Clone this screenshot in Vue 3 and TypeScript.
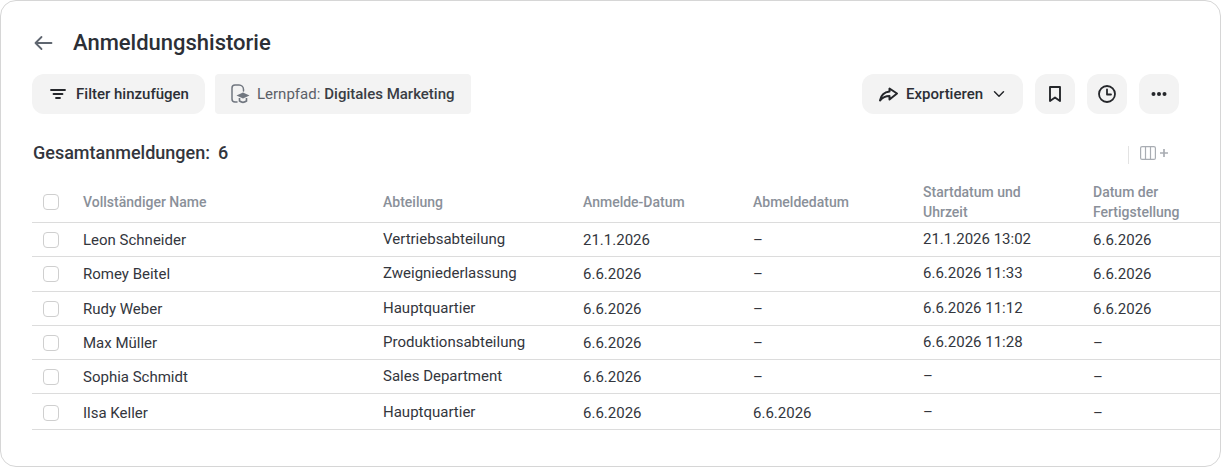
<script setup lang="ts">
interface Row {
  name: string
  department: string
  enrolled: string
  unenrolled: string
  started: string
  finished: string
}

const rows: Row[] = [
  { name: 'Leon Schneider', department: 'Vertriebsabteilung', enrolled: '21.1.2026', unenrolled: '–', started: '21.1.2026 13:02', finished: '6.6.2026' },
  { name: 'Romey Beitel', department: 'Zweigniederlassung', enrolled: '6.6.2026', unenrolled: '–', started: '6.6.2026 11:33', finished: '6.6.2026' },
  { name: 'Rudy Weber', department: 'Hauptquartier', enrolled: '6.6.2026', unenrolled: '–', started: '6.6.2026 11:12', finished: '6.6.2026' },
  { name: 'Max Müller', department: 'Produktionsabteilung', enrolled: '6.6.2026', unenrolled: '–', started: '6.6.2026 11:28', finished: '–' },
  { name: 'Sophia Schmidt', department: 'Sales Department', enrolled: '6.6.2026', unenrolled: '–', started: '–', finished: '–' },
  { name: 'Ilsa Keller', department: 'Hauptquartier', enrolled: '6.6.2026', unenrolled: '6.6.2026', started: '–', finished: '–' },
]
</script>

<template>
  <div class="card">
    <header class="title-row">
      <svg class="back" width="22" height="20" viewBox="0 0 22 20" fill="none">
        <path d="M19.500 10H3.500M9.500 4l-6 6 6 6" stroke="#5f6670" stroke-width="1.800" stroke-linecap="round" stroke-linejoin="round" />
      </svg>
      <h1>Anmeldungshistorie</h1>
    </header>

    <div class="toolbar">
      <button class="btn filter-btn">
        <svg width="20" height="20" viewBox="0 0 20 20" fill="none">
          <path d="M3 6h14M5.500 10h9M8 14h4" stroke="#25272b" stroke-width="1.800" stroke-linecap="round" />
        </svg>
        Filter hinzufügen
      </button>
      <div class="chip">
        <svg width="21" height="22" viewBox="0 0 21 22" fill="none">
          <path d="M7 19H5a3 3 0 0 1-3-3V5a3 3 0 0 1 3-3h4c2.500 0 4.500 2 4.500 4.500V8" stroke="#717780" stroke-width="1.500" stroke-linecap="round" stroke-linejoin="round" />
          <path d="M6.500 12.500 13 9.500l6.500 3-6.500 3z" fill="#717780" />
          <path d="M9.500 15v3c2 1.500 5 1.500 7 0v-3" stroke="#717780" stroke-width="1.600" />
        </svg>
        <span class="chip-label">Lernpfad:</span>
        <span class="chip-value">Digitales Marketing</span>
      </div>
      <div class="spacer"></div>
      <button class="btn export-btn">
        <svg width="20" height="20" viewBox="0 0 20 20" fill="none">
          <path d="M11.500 4.500v3C6.500 8 3 11 2 16.500c2.500-3 5.500-4.500 9.500-4.500v3.500L19 9.500z" stroke="#25272b" stroke-width="2" stroke-linejoin="round" />
        </svg>
        Exportieren
        <svg class="chevron" width="12" height="12" viewBox="0 0 12 12" fill="none">
          <path d="M1.500 3.800 6 8.200l4.500-4.400" stroke="#25272b" stroke-width="1.500" stroke-linecap="round" stroke-linejoin="round" />
        </svg>
      </button>
      <button class="icon-btn" aria-label="Merken">
        <svg width="20" height="20" viewBox="0 0 20 20" fill="none">
          <path d="M5 3h10v14l-5-3.500L5 17z" stroke="#25272b" stroke-width="1.900" stroke-linejoin="round" />
        </svg>
      </button>
      <button class="icon-btn" aria-label="Verlauf">
        <svg width="20" height="20" viewBox="0 0 20 20" fill="none">
          <circle cx="10" cy="10" r="8" stroke="#25272b" stroke-width="1.800" />
          <path d="M10 5.500V10.500h4" stroke="#25272b" stroke-width="1.800" stroke-linecap="round" stroke-linejoin="round" />
        </svg>
      </button>
      <button class="icon-btn" aria-label="Mehr">
        <svg width="20" height="20" viewBox="0 0 20 20" fill="#25272b">
          <circle cx="4.500" cy="10" r="2" />
          <circle cx="10" cy="10" r="2" />
          <circle cx="15.500" cy="10" r="2" />
        </svg>
      </button>
    </div>

    <div class="summary">
      <span class="summary-label">Gesamtanmeldungen:</span>
      <span class="summary-count">6</span>
      <div class="spacer"></div>
      <div class="columns-tool">
        <svg width="28" height="14" viewBox="0 0 28 14" fill="none">
          <rect x="0.600" y="0.600" width="14.800" height="12.800" rx="1.500" stroke="#a9adb3" stroke-width="1.200" />
          <path d="M5.500 0.600v12.800M10.500 0.600v12.800" stroke="#a9adb3" stroke-width="1.200" />
          <path d="M20 7h8M24 3v8" stroke="#a9adb3" stroke-width="1.700" />
        </svg>
      </div>
    </div>

    <div class="table">
      <div class="tr head">
        <span class="check"></span>
        <span>Vollständiger Name</span>
        <span>Abteilung</span>
        <span>Anmelde-Datum</span>
        <span>Abmeldedatum</span>
        <span class="narrow">Startdatum und Uhrzeit</span>
        <span>Datum der Fertigstellung</span>
      </div>
      <div v-for="row in rows" :key="row.name" class="tr">
        <span class="check"></span>
        <span>{{ row.name }}</span>
        <span class="raised">{{ row.department }}</span>
        <span>{{ row.enrolled }}</span>
        <span>{{ row.unenrolled }}</span>
        <span class="raised">{{ row.started }}</span>
        <span>{{ row.finished }}</span>
      </div>
    </div>
  </div>
</template>

<style>
html,
body {
  margin: 0;
  background: #fff;
  overflow: hidden;
}
</style>

<style scoped>
.card {
  box-sizing: border-box;
  width: 1221px;
  height: 467px;
  padding: 24px 0 0 32px;
  border: 1px solid #d6d6d6;
  border-radius: 16px;
  background: #fff;
  color: #2c2f36;
  font-family: Roboto, sans-serif;
  font-size: 15px;
  overflow: hidden;
}

.title-row {
  display: flex;
  align-items: center;
  gap: 19px;
  height: 34px;
  margin-left: -1px;
}

.back {
  flex: none;
  margin-top: 2px;
}

h1 {
  margin: 0;
  font-size: 22px;
  font-weight: 500;
  color: #2c2f36;
}

.toolbar {
  display: flex;
  align-items: center;
  margin: 15px 41px 0 -1px;
}

.spacer {
  flex: 1;
}

.btn,
.icon-btn {
  display: flex;
  align-items: center;
  justify-content: center;
  height: 40px;
  padding: 0;
  border: 0;
  border-radius: 12px;
  background: #f3f3f3;
  color: #2c2f36;
  font-family: inherit;
  font-size: 15px;
  font-weight: 500;
}

.filter-btn {
  gap: 8px;
  width: 173px;
}

.chip {
  display: flex;
  align-items: center;
  box-sizing: border-box;
  width: 256px;
  height: 40px;
  margin-left: 10px;
  padding-left: 15px;
  border-radius: 4px;
  background: #f3f3f3;
  color: #3a3d44;
  font-weight: 500;
}

.chip-label {
  margin-left: 6px;
  margin-right: 4px;
  font-weight: 400;
  color: #5b6068;
}

.export-btn {
  justify-content: flex-start;
  gap: 8px;
  width: 161px;
  padding-left: 16px;
}

.chevron {
  margin-left: 2px;
}

.icon-btn {
  width: 40px;
  margin-left: 12px;
}

.summary {
  display: flex;
  align-items: center;
  height: 24px;
  margin: 26px 52px 0 0;
}

.summary-label {
  font-size: 18px;
  font-weight: 500;
  color: #33363d;
}

.summary-count {
  margin-left: 8px;
  font-size: 18px;
  font-weight: 500;
  color: #33363d;
}

.columns-tool {
  align-self: flex-start;
  height: 18px;
  margin-top: 6px;
  padding-left: 11px;
  border-left: 1px solid #e3e3e3;
}

.columns-tool svg {
  display: block;
}

.table {
  margin: 10px 0 0 -1px;
}

.tr {
  display: grid;
  grid-template-columns: 51px 300px 200px 170px 170px 170px 127px;
  align-items: center;
  height: 34.25px;
  padding-top: 0.8px;
  border-bottom: 1px solid #dcdcdc;
  box-sizing: border-box;
  color: #33363d;
}

.tr:last-child {
  height: 36px;
  padding-top: 1.800px;
}

.head {
  height: 49px;
  padding-top: 7px;
  font-size: 14px;
  line-height: 20px;
  color: #8a9099;
  font-weight: 500;
}

.narrow {
  max-width: 120px;
}

.raised {
  padding-bottom: 2px;
}

.check {
  box-sizing: border-box;
  width: 16px;
  height: 16px;
  margin-left: 11px;
  border: 1px solid #cfcfcf;
  border-radius: 4px;
  background: #fff;
}
</style>
